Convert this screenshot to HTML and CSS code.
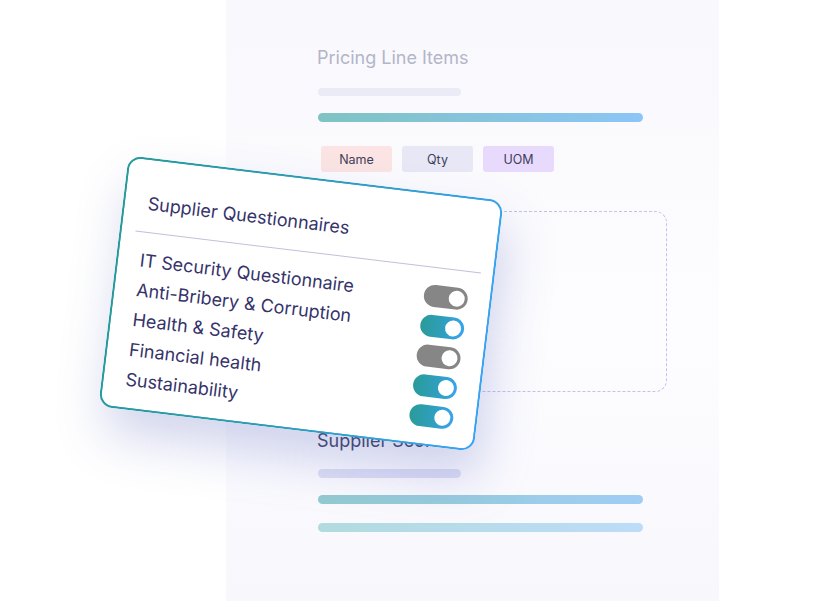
FILE: index.html
```html
<!DOCTYPE html>
<html lang="en">
<head>
<meta charset="utf-8">
<title>Supplier Questionnaires</title>
<link rel="stylesheet" href="styles.css">
</head>
<body>
<div class="stage">
  <section class="panel">
    <h2 class="panel-title">Pricing Line Items</h2>
    <div class="bar bar-short bar-lav"></div>
    <div class="bar bar-long bar-grad1"></div>
    <div class="chips">
      <span class="chip chip-name">Name</span>
      <span class="chip chip-qty">Qty</span>
      <span class="chip chip-uom">UOM</span>
    </div>
    <div class="dropzone"></div>
    <h2 class="panel-title panel-title-dark">Supplier Score</h2>
    <div class="bar bar-short bar-lav2"></div>
    <div class="bar bar-long bar-grad2"></div>
    <div class="bar bar-long bar-grad3"></div>
  </section>

  <div class="card">
    <div class="card-title">Supplier Questionnaires</div>
    <div class="card-divider"></div>
    <ul class="q-list">
      <li class="q-row"><span class="q-label">IT Security Questionnaire</span><span class="toggle toggle-off"></span></li>
      <li class="q-row"><span class="q-label">Anti-Bribery &amp; Corruption</span><span class="toggle toggle-on"></span></li>
      <li class="q-row"><span class="q-label">Health &amp; Safety</span><span class="toggle toggle-off"></span></li>
      <li class="q-row"><span class="q-label">Financial health</span><span class="toggle toggle-on"></span></li>
      <li class="q-row"><span class="q-label">Sustainability</span><span class="toggle toggle-on"></span></li>
    </ul>
  </div>
</div>
</body>
</html>
```

FILE: styles.css
```css
* { box-sizing: border-box; }

html, body {
  margin: 0;
  padding: 0;
  background: #ffffff;
}

body {
  font-family: "Inter", "Liberation Sans", sans-serif;
}

.stage {
  position: relative;
  width: 818px;
  height: 601px;
  overflow: hidden;
  display: flex;
  padding-left: 226px;
  background: #ffffff;
}

.panel {
  width: 493px;
  height: 601px;
  display: flex;
  flex-direction: column;
  align-items: flex-start;
  padding-left: 91px;
  padding-top: 46px;
  background: linear-gradient(180deg, #f8f8fd 0%, #fbfbfe 30%, #fdfdff 55%, #fafafe 80%, #f7f7fc 100%);
}

.panel-title {
  margin: 0;
  font-size: 18px;
  line-height: 24px;
  font-weight: 400;
  color: #b3b5c8;
  white-space: nowrap;
}

.panel-title-dark {
  margin-top: 37px;
  color: #43466b;
}

.bar {
  border-radius: 5px;
  flex: none;
  margin-left: 1px;
}

.bar-short { width: 143px; }
.bar-long { width: 325px; }

.bar-lav {
  height: 8px;
  margin-top: 17.5px;
  background: #ebebf8;
}

.bar-grad1 {
  height: 9px;
  margin-top: 17.5px;
  background: linear-gradient(90deg, #7fc3c3 0%, #8cc5f7 100%);
}

.chips {
  display: flex;
  gap: 10px;
  margin-top: 24px;
  margin-left: 4px;
}

.chip {
  width: 71px;
  height: 26px;
  border-radius: 3px;
  display: flex;
  align-items: center;
  justify-content: center;
  font-size: 12.5px;
  color: #40405a;
}

.chip-name { background: #fbe4e3; }
.chip-qty { background: #e7e7f6; }
.chip-uom { background: #e8dafd; }

.dropzone {
  width: 350px;
  height: 181px;
  margin-top: 38.5px;
  border: 1.5px dashed #c2c2ea;
  border-radius: 12px;
}

.bar-lav2 {
  height: 9px;
  margin-top: 16px;
  background: #dedef5;
}

.bar-grad2 {
  height: 9px;
  margin-top: 17.5px;
  background: linear-gradient(90deg, #93cbd0 0%, #a0cdf5 100%);
}

.bar-grad3 {
  height: 9px;
  margin-top: 19px;
  background: linear-gradient(90deg, #b1dbdf 0%, #bddcf8 100%);
}

/* Floating card */
.card {
  position: absolute;
  left: 112px;
  top: 176.5px;
  width: 378px;
  height: 253px;
  transform: rotate(6.9deg);
  border: 2px solid transparent;
  border-radius: 14px;
  background:
    linear-gradient(#ffffff, #ffffff) padding-box,
    linear-gradient(95deg, #27999a 0%, #2f9cb8 50%, #3aa3f2 100%) border-box;
  box-shadow: 8px 26px 50px rgba(75, 88, 185, 0.25);
  padding: 33px 22px 0 21px;
  color: #35336a;
}

.card-title {
  font-size: 18px;
  line-height: 22px;
  padding-left: 2px;
  white-space: nowrap;
}

.card-divider {
  height: 1px;
  margin: 16.5px -10px 0 -7px;
  background: #c3bfd8;
}

.q-list {
  list-style: none;
  margin: 13px 0 0 0;
  padding: 0;
}

.q-row {
  height: 30.2px;
  display: flex;
  align-items: center;
  justify-content: space-between;
}

.q-label {
  font-size: 18px;
  line-height: 22px;
  white-space: nowrap;
  padding-left: 1px;
}

.toggle {
  position: relative;
  width: 44px;
  height: 22px;
  border-radius: 11px;
  flex: none;
}

.toggle::after {
  content: "";
  position: absolute;
  right: 3px;
  top: 3px;
  width: 16px;
  height: 16px;
  border-radius: 50%;
  background: #ffffff;
}

.toggle-off { background: #868686; }
.toggle-on { background: linear-gradient(90deg, #2a9b98 0%, #2f9fbf 55%, #3aa3f0 100%); }
```
